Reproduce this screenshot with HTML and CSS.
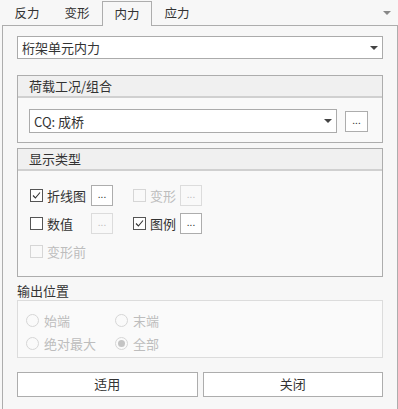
FILE: index.html
```html
<!DOCTYPE html>
<html lang="zh">
<head>
<meta charset="utf-8">
<link rel="stylesheet" href="styles.css">
</head>
<body>
<div class="tabs">
  <div class="tab">反力</div>
  <div class="tab">变形</div>
  <div class="tab active">内力</div>
  <div class="tab">应力</div>
  <div class="tab-spacer"></div>
  <div class="tab-menu"><span class="tri gray"></span></div>
</div>
<div class="panel">
  <div class="combo main-combo"><span class="combo-text">桁架单元内力</span><span class="tri"></span></div>

  <div class="group">
    <div class="group-head">荷载工况/组合</div>
    <div class="group-body load-body">
      <div class="combo load-combo"><span class="combo-text">CQ: 成桥</span><span class="tri"></span></div>
      <div class="btn-dots">...</div>
    </div>
  </div>

  <div class="group display-group">
    <div class="group-head">显示类型</div>
    <div class="group-body display-body">
      <div class="chk-cell">
        <span class="chk"><svg viewBox="0 0 13 13" width="13" height="13"><path d="M3 6.5 L5.4 9 L10 3.5" fill="none" stroke="#333" stroke-width="1.1"/></svg></span>
        <span class="chk-label">折线图</span>
      </div>
      <div class="btn-dots">...</div>
      <div class="chk-cell disabled">
        <span class="chk"></span>
        <span class="chk-label">变形</span>
      </div>
      <div class="btn-dots disabled">...</div>

      <div class="chk-cell">
        <span class="chk"></span>
        <span class="chk-label">数值</span>
      </div>
      <div class="btn-dots disabled">...</div>
      <div class="chk-cell">
        <span class="chk"><svg viewBox="0 0 13 13" width="13" height="13"><path d="M3 6.5 L5.4 9 L10 3.5" fill="none" stroke="#333" stroke-width="1.1"/></svg></span>
        <span class="chk-label">图例</span>
      </div>
      <div class="btn-dots">...</div>

      <div class="chk-cell disabled wide">
        <span class="chk"></span>
        <span class="chk-label">变形前</span>
      </div>
    </div>
  </div>

  <div class="out-label">输出位置</div>
  <div class="out-box">
    <div class="radio-cell"><span class="radio"></span><span>始端</span></div>
    <div class="radio-cell"><span class="radio"></span><span>末端</span></div>
    <div class="radio-cell"><span class="radio"></span><span>绝对最大</span></div>
    <div class="radio-cell"><span class="radio checked"></span><span>全部</span></div>
  </div>

  <div class="actions">
    <div class="btn">适用</div>
    <div class="btn">关闭</div>
  </div>
</div>
</body>
</html>
```
FILE: styles.css
```css
* { box-sizing: border-box; }
html, body { margin: 0; padding: 0; }
body {
  width: 398px;
  height: 409px;
  overflow: hidden;
  background: #f7f7f7;
  font-family: "Noto Sans CJK SC", "Microsoft YaHei", sans-serif;
  font-size: 13px;
  color: #333;
}
.tabs {
  display: flex;
  height: 25px;
  padding-left: 2px;
  align-items: flex-end;
}
.tab {
  width: 50px;
  height: 24px;
  line-height: 24px;
  text-align: center;
  font-size: 12.5px;
  color: #333;
}
.tab.active {
  border: 1px solid #adadad;
  border-bottom: none;
  background: #f7f7f7;
  height: 25px;
  line-height: 23px;
  position: relative;
  top: 1px;
}
.tab-spacer { flex: 1; }
.tab-menu {
  width: 20px;
  height: 24px;
  display: flex;
  align-items: center;
  justify-content: center;
  padding-right: 2px;
}
.tri {
  display: inline-block;
  width: 0; height: 0;
  border-left: 4px solid transparent;
  border-right: 4px solid transparent;
  border-top: 4px solid #444;
}
.tri.gray { border-top-color: #888; }

.panel {
  margin-left: 2px;
  width: 396px;
  height: 384px;
  border: 1px solid #adadad;
  border-bottom: none;
  padding: 10px 14px 0 14px;
  background: #f7f7f7;
}
.combo {
  display: flex;
  align-items: center;
  justify-content: space-between;
  height: 23px;
  background: #fff;
  border: 1px solid #ababab;
  padding: 0 4px 0 4px;
}
.combo-text { line-height: 21px; }
.group {
  margin-top: 16px;
  border: 1px solid #adadad;
  background: #f9f9f9;
}
.display-group { margin-top: 5px; }
.group-head {
  height: 22px;
  line-height: 19px;
  padding-left: 11px;
  background: #f0f0f0;
  border-bottom: 2px solid #d0d0d0;
}
.load-body {
  display: flex;
  align-items: center;
  padding: 11px 14px 9px 11px;
}
.load-combo { width: 308px; height: 24px; }
.btn-dots {
  width: 22px;
  height: 21px;
  border: 1px solid #adadad;
  background: #fff;
  font-size: 10px;
  line-height: 15px;
  text-align: center;
  color: #333;
  letter-spacing: 0;
}
.load-body .btn-dots { margin-left: 8px; width: 23px; }
.btn-dots.disabled {
  border-color: #dcdcdc;
  background: #f9f9f9;
  color: #c0c0c0;
}
.display-body {
  display: grid;
  grid-template-columns: 61px 22px 47px 22px;
  column-gap: 0;
  row-gap: 7px;
  grid-auto-rows: 21px;
  padding: 14px 0 14px 12px;
}
.display-body .chk-cell:nth-child(4n+3) { margin-left: 20px; }
.display-body > .btn-dots:nth-child(4n+2) { }
.display-body { grid-template-columns: 61px 22px 67px 22px; }
.chk-cell {
  display: flex;
  align-items: center;
  white-space: nowrap;
}
.chk-cell.wide { grid-column: 1 / span 2; }
.chk {
  width: 13px;
  height: 13px;
  border: 1px solid #555;
  background: #fff;
  display: inline-flex;
  align-items: center;
  justify-content: center;
  margin-right: 4px;
  flex: none;
}
.chk svg { display: block; margin: -1px; }
.chk-label { line-height: 21px; }
.chk-cell.disabled .chk { border-color: #d6d6d6; background: #f9f9f9; }
.chk-cell.disabled .chk-label { color: #bdbdbd; }

.out-label {
  margin-top: 6px;
  height: 17px;
  line-height: 16px;
}
.out-box {
  border: 1px solid #dcdcdc;
  background: #fafafa;
  display: grid;
  grid-template-columns: 89px 1fr;
  grid-auto-rows: 15px;
  row-gap: 8px;
  padding: 12px 0 6px 8px;
  height: 58px;
  color: #bdbdbd;
}
.radio-cell {
  display: flex;
  align-items: center;
  white-space: nowrap;
}
.radio {
  width: 13px;
  height: 13px;
  border: 1px solid #d6d6d6;
  border-radius: 50%;
  background: #fafafa;
  margin-right: 5px;
  display: inline-flex;
  align-items: center;
  justify-content: center;
  flex: none;
}
.radio.checked::after {
  content: "";
  width: 7px;
  height: 7px;
  border-radius: 50%;
  background: #c4c4c4;
}
.actions {
  display: flex;
  gap: 5px;
  margin-top: 14px;
}
.btn {
  flex: 1;
  height: 25px;
  border: 1px solid #adadad;
  background: #fff;
  text-align: center;
  line-height: 22px;
  color: #333;
}
```
